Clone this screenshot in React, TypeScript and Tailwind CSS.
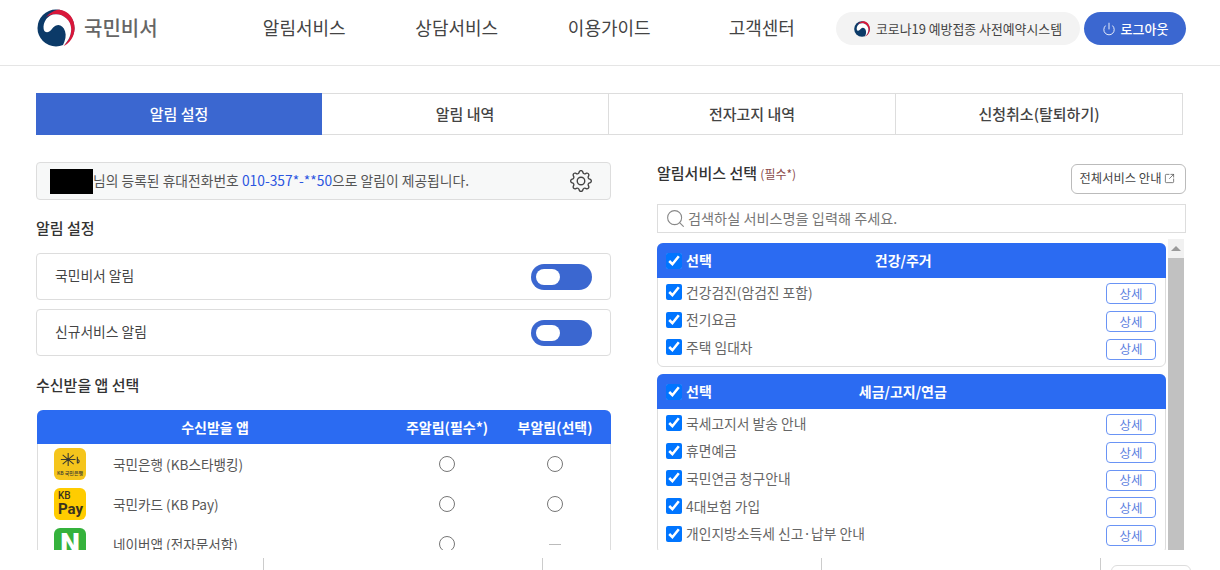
import { Power, Search, SquareArrowOutUpRight } from "lucide-react";
import { BsGear } from "react-icons/bs";

const navItems = ["알림서비스", "상담서비스", "이용가이드", "고객센터"];
const tabs = ["알림 설정", "알림 내역", "전자고지 내역", "신청취소(탈퇴하기)"];

const healthRows = ["건강검진(암검진 포함)", "전기요금", "주택 임대차"];
const taxRows = [
  "국세고지서 발송 안내",
  "휴면예금",
  "국민연금 청구안내",
  "4대보험 가입",
  "개인지방소득세 신고·납부 안내",
];

function Taegeuk({ className }: { className: string }) {
  return (
    <svg viewBox="0 0 40 40" className={className}>
      <circle cx="20" cy="20" r="19.5" fill="#0b3a68" />
      <path
        d="M9 9 C14 3 20 .5 24 .8 C33 2 40 10 39.6 21 C39 30 34 36 28 39 C33 34 36 28 36 21 C35.500 12 28 5.500 20 5.500 C16 5.500 12 6.500 9 9Z"
        fill="#d8173a"
      />
      <path
        d="M7 21 C6 14 11 5.500 20 5.500 C28 5.500 36 12 36 21 C36 29 32 35 27 39 C30 33 31 28 29.500 23.500 C28 19 25 16.500 21.500 17 C17 17.500 16 22 12.500 24 C10 25 7.500 24 7 21Z"
        fill="#ffffff"
      />
    </svg>
  );
}

function AppRow({
  icon,
  name,
  subAlarm = true,
}: {
  icon: React.ReactNode;
  name: string;
  subAlarm?: boolean;
}) {
  return (
    <div className="flex h-10 items-center">
      <div className="ml-4 h-8 w-8 shrink-0 overflow-hidden rounded-md">{icon}</div>
      <div className="ml-[27px] w-[280px] text-[13.6px] text-[#555]">{name}</div>
      <div className="flex w-[108px] justify-center">
        <input type="radio" className="h-4 w-4" />
      </div>
      <div className="flex w-[108px] justify-center">
        {subAlarm ? (
          <input type="radio" className="h-4 w-4" />
        ) : (
          <span className="h-px w-3 bg-[#bbb]" />
        )}
      </div>
    </div>
  );
}

function ServiceCard({ title, rows, titleOffset }: { title: string; rows: string[]; titleOffset: string }) {
  return (
    <div className="mb-[7px] rounded-md border border-[#ddd] pb-[5px]">
      <div className="-mx-px -mt-px flex h-[35px] items-center rounded-t-md bg-[#2b6bf2] pl-[9px] text-[14px] font-bold text-white">
        <input type="checkbox" defaultChecked className="h-4 w-4 accent-[#0075ff]" />
        <span className="ml-1">선택</span>
        <span className={titleOffset}>{title}</span>
      </div>
      <div>
        {rows.map((row) => (
          <div key={row} className="flex h-[27.7px] items-center pl-2 pr-[9px]">
            <input type="checkbox" defaultChecked className="h-4 w-4 accent-[#0075ff]" />
            <span className="ml-1 flex-1 text-[13.8px] text-[#666]">{row}</span>
            <button className="h-[21px] w-[50px] translate-y-0.5 rounded-[4px] border border-[#6a94f5] bg-white text-[12.5px] leading-[18px] text-[#5b7ee0]">
              상세
            </button>
          </div>
        ))}
      </div>
    </div>
  );
}

export default function App() {
  return (
    <div className="h-[570px] w-[1220px] overflow-hidden bg-white font-['Noto_Sans_CJK_KR','Noto_Sans',sans-serif] text-[#333]">
      <header className="flex h-[66px] items-start border-b border-[#e5e5e5]">
        <div className="ml-[37px] mt-[9px] flex w-[191px] items-center">
          <Taegeuk className="h-[38px] w-[38px]" />
          <span className="ml-[9px] text-[20px] font-medium text-[#666]">국민비서</span>
        </div>
        <nav className="mt-[14px] flex">
          {navItems.map((item) => (
            <a key={item} className="w-[152.5px] text-center text-[18px] leading-[26px] text-[#444]">
              {item}
            </a>
          ))}
        </nav>
        <div className="ml-[-2px] mt-3 flex h-[33px] w-[244px] items-center justify-center rounded-full bg-[#f3f3f3] text-[12.9px] text-[#444]">
          <Taegeuk className="mr-[6px] h-4 w-4" />
          코로나19 예방접종 사전예약시스템
        </div>
        <button className="ml-1 mt-3 flex h-[33px] w-[102px] items-center justify-center rounded-full bg-[#3b67d0] text-[13px] font-medium text-white">
          <Power className="mr-[5px] h-[14px] w-[14px]" strokeWidth={1.5} />
          로그아웃
        </button>
      </header>

      <main className="h-[484px] overflow-hidden px-9">
        <div className="mt-[27px] flex h-[42px] w-[1147px]">
          {tabs.map((tab, i) => (
            <div
              key={tab}
              className={
                i === 0
                  ? "flex flex-1 items-center justify-center bg-[#3b67d0] text-[15px] font-medium text-white"
                  : "flex flex-1 items-center justify-center border-y border-r border-[#ddd] text-[15px] font-medium text-[#444]"
              }
            >
              {tab}
            </div>
          ))}
        </div>

        <div className="mt-[27px] flex gap-[46px]">
          <section className="w-[575px] shrink-0">
            <div className="flex h-[38px] items-center rounded-[4px] border border-[#ddd] bg-[#f7f8f8] pl-[13px] pr-[18px] text-[13.8px] text-[#555]">
              <span className="h-[25px] w-[43px] bg-black" />
              <span className="-translate-y-px">
                님의 등록된 휴대전화번호 <span className="text-[#2b55e0]">010-357*-**50</span>으로 알림이 제공됩니다.
              </span>
              <BsGear className="ml-auto h-[22px] w-[22px] text-[#444]" />
            </div>

            <h2 className="mt-[16px] text-[15px] font-medium leading-[24px] text-[#333]">알림 설정</h2>
            <div className="mt-[13px] flex flex-col gap-[9px]">
              {["국민비서 알림", "신규서비스 알림"].map((label) => (
                <div
                  key={label}
                  className="flex h-[47px] items-center justify-between rounded-[4px] border border-[#ddd] px-[18px] text-[13.8px] text-[#444]"
                >
                  <span className="-translate-y-px">{label}</span>
                  <span className="flex h-[26px] w-[61px] items-center rounded-full bg-[#3b67d0] pl-[5px]">
                    <span className="h-4 w-6 rounded-full bg-white" />
                  </span>
                </div>
              ))}
            </div>

            <h2 className="mt-[17px] text-[15px] font-medium leading-[24px] text-[#333]">수신받을 앱 선택</h2>
            <div className="ml-px mt-[13px] rounded-t-md border-x border-[#ddd]">
              <div className="-mx-px flex h-[34px] items-center rounded-t-md bg-[#2b6bf2] text-[14px] font-bold text-white">
                <span className="w-[356px] text-center">수신받을 앱</span>
                <span className="w-[108px] text-center">주알림(필수*)</span>
                <span className="w-[108px] text-center">부알림(선택)</span>
              </div>
              <AppRow
                name="국민은행 (KB스타뱅킹)"
                icon={
                  <div className="flex h-full w-full flex-col items-center bg-[#f5c51c] pt-[3px] text-[#3b3a30]">
                    <svg viewBox="0 0 24 16" className="h-[17px] w-[22px]" fill="none" stroke="currentColor" strokeWidth="1.2">
                      <path d="M10 1v14M4 3l12 10M16 3L4 13M2 8h16M20 5v7M20 12a2 2 0 1 0 0-4" />
                    </svg>
                    <span className="mt-[2px] whitespace-nowrap text-[5px] leading-[6px] font-medium">KB 국민은행</span>
                  </div>
                }
              />
              <AppRow
                name="국민카드 (KB Pay)"
                icon={
                  <div className="flex h-full w-full flex-col bg-[#ffcc00] pl-1 pt-[2px] font-['Roboto',sans-serif] text-[#3a3320]">
                    <span className="text-[10px] font-medium leading-[11px]">KB</span>
                    <span className="text-[15px] font-bold leading-[16px]">Pay</span>
                  </div>
                }
              />
              <AppRow
                name="네이버앱 (전자문서함)"
                subAlarm={false}
                icon={
                  <div className="flex h-full w-full items-center justify-center bg-[#35b23c] font-['Roboto',sans-serif] text-[28px] font-black text-white">
                    N
                  </div>
                }
              />
            </div>
          </section>

          <section className="w-[529px] shrink-0">
            <div className="flex h-[34px] items-start justify-between">
              <h2 className="mt-px text-[15px] font-medium leading-[20px] text-[#333]">
                알림서비스 선택 <span className="text-[12px] font-normal text-[#8a4a4a]">(필수*)</span>
              </h2>
              <button className="mt-[2px] flex h-[30px] w-[115px] items-center justify-center rounded-md border border-[#bbb] pr-[2px] text-[12.3px] text-[#444]">
                <span className="-translate-y-px">전체서비스 안내</span>
                <SquareArrowOutUpRight className="ml-[3px] h-[11px] w-[11px] -translate-y-px" strokeWidth={1.5} />
              </button>
            </div>
            <div className="mt-2 flex h-[29px] items-center border border-[#ddd] pl-[7px] text-[14.2px] text-[#777]">
              <Search className="mr-[2px] h-[21px] w-[21px] text-[#888]" strokeWidth={1.25} />
              검색하실 서비스명을 입력해 주세요.
            </div>
            <div className="mt-[6px] flex">
              <div className="mt-1 w-[509px] shrink-0">
                <ServiceCard title="건강/주거" rows={healthRows} titleOffset="ml-[163px]" />
                <ServiceCard title="세금/고지/연금" rows={taxRows} titleOffset="ml-[147px]" />
              </div>
              <div className="ml-[2px] flex w-[16px] flex-col bg-[#f1f1f1]">
                <div className="flex h-[19px] items-center justify-center">
                  <span className="h-0 w-0 border-x-[5px] border-b-[5px] border-x-transparent border-b-[#9a9a9a]" />
                </div>
                <div className="h-[400px] bg-[#c1c1c1]" />
              </div>
            </div>
          </section>
        </div>
      </main>

      <footer className="relative flex h-5 pl-[263px] pt-2">
        <span className="h-3 w-px bg-[#ccc]" />
        <span className="ml-[278px] h-3 w-px bg-[#ccc]" />
        <span className="ml-[278px] h-3 w-px bg-[#ccc]" />
        <span className="ml-[278px] h-3 w-px bg-[#ccc]" />
        <span className="absolute left-[1111px] top-[15px] h-8 w-[80px] rounded-md border border-[#ddd]" />
      </footer>
    </div>
  );
}
